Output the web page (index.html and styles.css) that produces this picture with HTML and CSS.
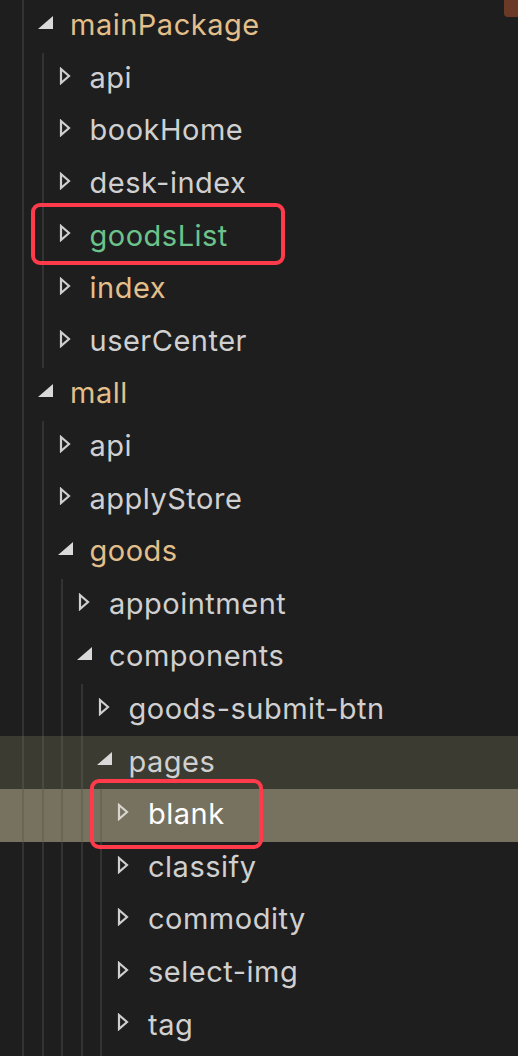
FILE: index.html
```html
<!DOCTYPE html>
<html>
<head>
<meta charset="utf-8">
<link rel="stylesheet" href="styles.css">
</head>
<body>
<div class="tree">
  <span class="marker"></span>

  <div class="row"><span class="node"><span class="tw"><svg class="exp" width="15" height="13" viewBox="0 0 15 13"><polygon points="15,0 15,13 0,13"/></svg></span><span class="lbl tan">mainPackage</span></span></div>
  <div class="row"><i class="g"></i><span class="node"><span class="tw"><svg class="col" width="12" height="18" viewBox="0 0 12 18"><polygon points="2,2 10,9 2,16"/></svg></span><span class="lbl">api</span></span></div>
  <div class="row"><i class="g"></i><span class="node"><span class="tw"><svg class="col" width="12" height="18" viewBox="0 0 12 18"><polygon points="2,2 10,9 2,16"/></svg></span><span class="lbl">bookHome</span></span></div>
  <div class="row"><i class="g"></i><span class="node"><span class="tw"><svg class="col" width="12" height="18" viewBox="0 0 12 18"><polygon points="2,2 10,9 2,16"/></svg></span><span class="lbl">desk-index</span></span></div>
  <div class="row mark-a"><i class="g"></i><span class="node"><span class="tw"><svg class="col" width="12" height="18" viewBox="0 0 12 18"><polygon points="2,2 10,9 2,16"/></svg></span><span class="lbl green">goodsList</span></span><span class="box box-a"></span></div>
  <div class="row"><i class="g"></i><span class="node"><span class="tw"><svg class="col" width="12" height="18" viewBox="0 0 12 18"><polygon points="2,2 10,9 2,16"/></svg></span><span class="lbl tan">index</span></span></div>
  <div class="row"><i class="g"></i><span class="node"><span class="tw"><svg class="col" width="12" height="18" viewBox="0 0 12 18"><polygon points="2,2 10,9 2,16"/></svg></span><span class="lbl">userCenter</span></span></div>

  <div class="row"><span class="node"><span class="tw"><svg class="exp" width="15" height="13" viewBox="0 0 15 13"><polygon points="15,0 15,13 0,13"/></svg></span><span class="lbl tan">mall</span></span></div>
  <div class="row"><i class="g"></i><span class="node"><span class="tw"><svg class="col" width="12" height="18" viewBox="0 0 12 18"><polygon points="2,2 10,9 2,16"/></svg></span><span class="lbl">api</span></span></div>
  <div class="row"><i class="g"></i><span class="node"><span class="tw"><svg class="col" width="12" height="18" viewBox="0 0 12 18"><polygon points="2,2 10,9 2,16"/></svg></span><span class="lbl">applyStore</span></span></div>
  <div class="row"><i class="g"></i><span class="node"><span class="tw"><svg class="exp" width="15" height="13" viewBox="0 0 15 13"><polygon points="15,0 15,13 0,13"/></svg></span><span class="lbl tan">goods</span></span></div>
  <div class="row"><i class="g"></i><i class="g"></i><span class="node"><span class="tw"><svg class="col" width="12" height="18" viewBox="0 0 12 18"><polygon points="2,2 10,9 2,16"/></svg></span><span class="lbl">appointment</span></span></div>
  <div class="row"><i class="g"></i><i class="g"></i><span class="node"><span class="tw"><svg class="exp" width="15" height="13" viewBox="0 0 15 13"><polygon points="15,0 15,13 0,13"/></svg></span><span class="lbl">components</span></span></div>
  <div class="row"><i class="g"></i><i class="g"></i><i class="g"></i><span class="node"><span class="tw"><svg class="col" width="12" height="18" viewBox="0 0 12 18"><polygon points="2,2 10,9 2,16"/></svg></span><span class="lbl">goods-submit-btn</span></span></div>
  <div class="row hover"><i class="g"></i><i class="g"></i><i class="g"></i><span class="node"><span class="tw"><svg class="exp" width="15" height="13" viewBox="0 0 15 13"><polygon points="15,0 15,13 0,13"/></svg></span><span class="lbl">pages</span></span></div>
  <div class="row selected"><i class="g"></i><i class="g"></i><i class="g"></i><i class="g"></i><span class="node"><span class="tw"><svg class="col" width="12" height="18" viewBox="0 0 12 18"><polygon points="2,2 10,9 2,16"/></svg></span><span class="lbl">blank</span></span><span class="box box-b"></span></div>
  <div class="row"><i class="g"></i><i class="g"></i><i class="g"></i><i class="g"></i><span class="node"><span class="tw"><svg class="col" width="12" height="18" viewBox="0 0 12 18"><polygon points="2,2 10,9 2,16"/></svg></span><span class="lbl">classify</span></span></div>
  <div class="row"><i class="g"></i><i class="g"></i><i class="g"></i><i class="g"></i><span class="node"><span class="tw"><svg class="col" width="12" height="18" viewBox="0 0 12 18"><polygon points="2,2 10,9 2,16"/></svg></span><span class="lbl">commodity</span></span></div>
  <div class="row"><i class="g"></i><i class="g"></i><i class="g"></i><i class="g"></i><span class="node"><span class="tw"><svg class="col" width="12" height="18" viewBox="0 0 12 18"><polygon points="2,2 10,9 2,16"/></svg></span><span class="lbl">select-img</span></span></div>
  <div class="row"><i class="g"></i><i class="g"></i><i class="g"></i><i class="g"></i><span class="node"><span class="tw"><svg class="col" width="12" height="18" viewBox="0 0 12 18"><polygon points="2,2 10,9 2,16"/></svg></span><span class="lbl">tag</span></span></div>
  <div class="row"><i class="g"></i><i class="g"></i><i class="g"></i><i class="g"></i><span class="node"></span></div>
</div>
</body>
</html>
```

FILE: styles.css
```css
html, body {
  margin: 0;
  padding: 0;
  background: #1e1e1e;
  height: 1056px;
  overflow: hidden;
}

.tree {
  position: relative;
  width: 518px;
  height: 1056px;
  overflow: hidden;
  font-family: Inter, "Noto Sans", sans-serif;
  font-size: 29px;
  letter-spacing: 0.5px;
  color: #d0d0d0;
}

.marker {
  position: absolute;
  top: 0;
  right: 0;
  width: 14px;
  height: 17px;
  background: #6b3a27;
  border-bottom-left-radius: 4px;
  z-index: 3;
}

.row {
  position: relative;
  display: flex;
  align-items: stretch;
  height: 52.6px;
  padding-left: 22px;
  box-sizing: border-box;
}

.g {
  display: block;
  flex: none;
  width: 19.5px;
  box-sizing: border-box;
  border-left: 2px solid #333333;
}

.node {
  display: flex;
  align-items: center;
  flex: 1;
  border-left: 2px solid #333333;
  padding-left: 12px;
}

.tw {
  flex: none;
  width: 35px;
  height: 100%;
  position: relative;
  display: flex;
  align-items: flex-start;
}

.tw .exp {
  margin-top: 16px;
  margin-left: 2px;
}
.tw .exp polygon {
  fill: #d9d9d9;
}

.tw .col {
  margin-top: 14px;
  margin-left: 3px;
}
.tw .col polygon {
  fill: none;
  stroke: #cfcfcf;
  stroke-width: 2.2;
  stroke-linejoin: miter;
}

.lbl {
  line-height: 1;
  margin-top: -3px;
  margin-left: -1px;
  white-space: nowrap;
}

.tan { color: #e2bf8b; }
.green { color: #6cc38b; }

.hover {
  background: #3c3b31;
}
.hover .g, .hover .node {
  border-left-color: #4b4a42;
}

.selected {
  background: #777260;
}
.selected .g, .selected .node {
  border-left-color: #6a6656;
}
.selected .lbl {
  color: #ffffff;
}
.selected .tw .col polygon {
  stroke: #d8d6cc;
}

.box {
  position: absolute;
  border: 4px solid #ff3a4a;
  border-radius: 9px;
  box-sizing: border-box;
  pointer-events: none;
  z-index: 2;
}
.box-a {
  left: 31px;
  top: -7px;
  width: 254px;
  height: 62px;
}
.box-b {
  left: 90px;
  top: -10px;
  width: 173px;
  height: 70px;
}
```
